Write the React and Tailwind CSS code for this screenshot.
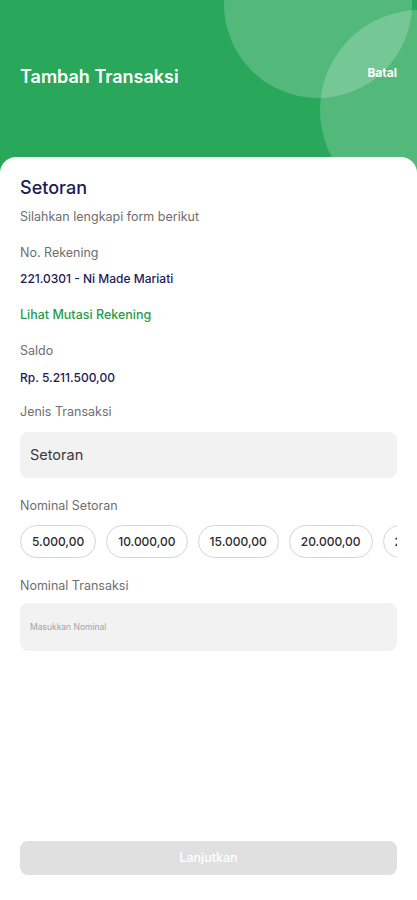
import React from 'react';

const chips = ['5.000,00', '10.000,00', '15.000,00', '20.000,00', '25.000,00', '50.000,00'];

export default function App() {
  return (
    <div
      className="relative flex min-h-[900px] w-full flex-col overflow-hidden bg-[#29a85b]"
      style={{ fontFamily: 'Inter, "Noto Sans", sans-serif' }}
    >
      {/* decorative circles */}
      <div className="absolute left-[224px] top-[-90px] h-[188px] w-[188px] rounded-full bg-white/20" />
      <div className="absolute left-[320px] top-[10px] h-[200px] w-[200px] rounded-full bg-white/20" />

      <header className="relative z-10 flex h-[157px] items-center justify-between px-5 pb-1">
        <h1 className="text-[18px] font-semibold text-white">Tambah Transaksi</h1>
        <button type="button" className="mb-2 text-[12px] font-bold text-white">Batal</button>
      </header>

      <main className="relative z-10 flex flex-1 flex-col rounded-t-[16px] bg-white px-5 pt-[19px]">
        <h2 className="text-[18px] font-medium leading-6 text-[#1d1b55]">Setoran</h2>
        <p className="mt-2 text-[12.5px] leading-[18px] text-[#6e6e6e]">Silahkan lengkapi form berikut</p>

        <p className="mt-[18px] text-[12.5px] leading-[18px] text-[#6e6e6e]">No. Rekening</p>
        <p className="mt-2 text-[12px] font-medium leading-[18px] text-[#1d1b55]">221.0301 - Ni Made Mariati</p>

        <p className="mt-[18px] text-[12.5px] font-medium leading-[18px] text-[#1f9d4c]">Lihat Mutasi Rekening</p>

        <p className="mt-[18px] text-[12.5px] leading-[18px] text-[#6e6e6e]">Saldo</p>
        <p className="mt-[9px] text-[12px] font-medium leading-[18px] text-[#1d1b55]">Rp. 5.211.500,00</p>

        <p className="mt-4 text-[12.5px] leading-[18px] text-[#6e6e6e]">Jenis Transaksi</p>
        <div className="mt-[11px] flex h-[46px] items-center rounded-lg bg-[#f2f2f2] px-[10px]">
          <span className="text-[14.5px] text-[#3a3a3a]">Setoran</span>
        </div>

        <p className="mt-[19px] text-[12.5px] leading-[18px] text-[#6e6e6e]">Nominal Setoran</p>
        <div className="mt-[10px] flex gap-[10px] overflow-hidden">
          {chips.map((c) => (
            <span
              key={c}
              className="flex h-[33px] shrink-0 items-center rounded-full border border-[#d4d4d4] px-[11px] text-[12px] font-medium text-[#2b2b2b]"
            >
              {c}
            </span>
          ))}
        </div>

        <p className="mt-[19px] text-[12.5px] leading-[18px] text-[#6e6e6e]">Nominal Transaksi</p>
        <div className="mt-2 flex h-12 items-center rounded-lg bg-[#f2f2f2] px-[10px]">
          <span className="text-[8.5px] text-[#a3a3a3]">Masukkan Nominal</span>
        </div>

        <div className="flex-1" />
        <button
          type="button"
          className="mb-[25px] h-[34px] w-full rounded-lg bg-[#e0e0e0] text-[12.5px] font-medium text-white"
        >
          Lanjutkan
        </button>
      </main>
    </div>
  );
}
